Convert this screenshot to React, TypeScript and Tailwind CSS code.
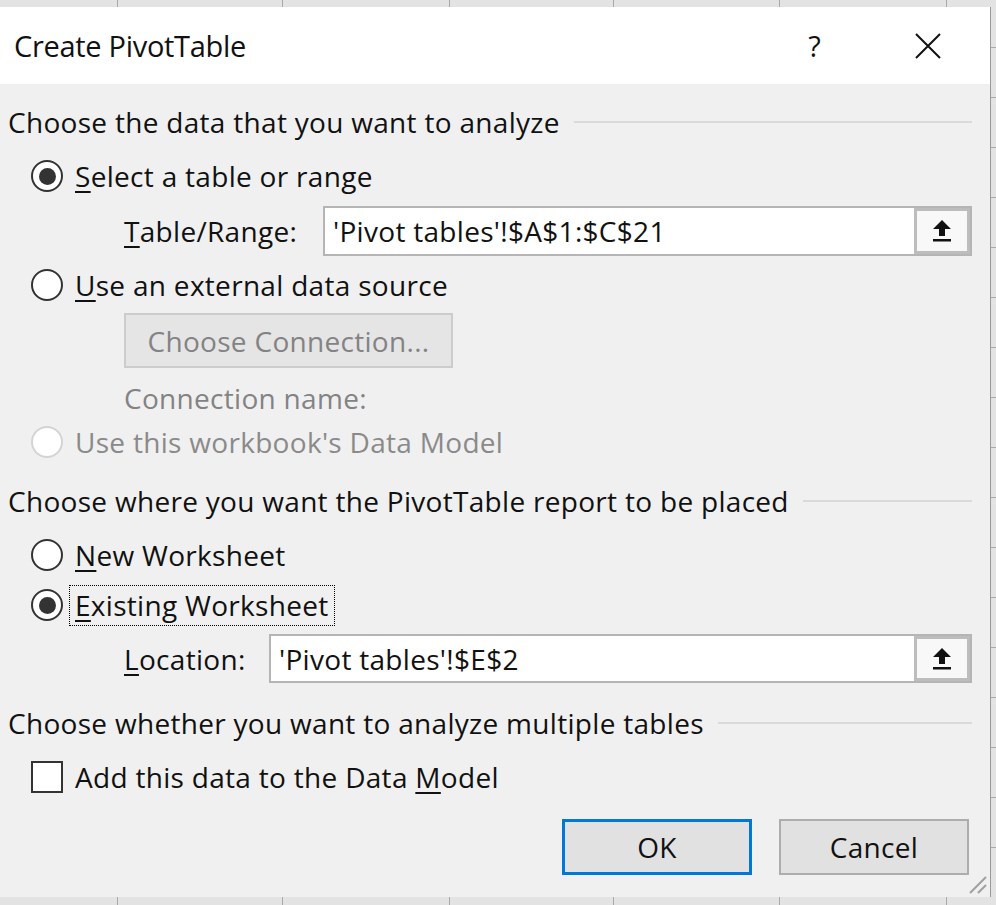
import React from "react";

const font = { fontFamily: '"Open Sans", "Noto Sans", sans-serif' };

function Radio({ checked = false, disabled = false }: { checked?: boolean; disabled?: boolean }) {
  return (
    <span
      className={`flex h-[32px] w-[32px] shrink-0 items-center justify-center rounded-full border-2 bg-white ${
        disabled ? "border-[#d4d4d4]" : "border-[#333333]"
      }`}
    >
      {checked && <span className="h-[17px] w-[17px] rounded-full bg-[#333333]" />}
    </span>
  );
}

function Heading({ text }: { text: string }) {
  return (
    <div className="flex h-[36px] items-center pl-[8px] pr-[18px]">
      <span className="whitespace-nowrap">{text}</span>
      <div className="ml-[14px] h-[2px] flex-1 bg-[#dadada]" />
    </div>
  );
}

function RefButton() {
  return (
    <div className="flex h-full w-[56px] items-center justify-center border-[3px] border-[#bdbdbd] bg-[#f8f8f8]">
      <svg width="22" height="24" viewBox="0 0 22 24">
        <path d="M11 1 L20 10 L14 10 L14 17 L8 17 L8 10 L2 10 Z" fill="#111" />
        <rect x="2" y="20" width="18" height="2.5" fill="#111" />
      </svg>
    </div>
  );
}

function GridStrip({ h }: { h: string }) {
  const cells = ["w-[118px]", "w-[165px]", "w-[167px]", "w-[164px]", "w-[166px]", "w-[167px]"];
  return (
    <div className={`flex ${h} w-full bg-[#e3e3e3]`}>
      {cells.map((c, i) => (
        <div key={i} className={`${c} h-full border-r border-[#a9a9a9]`} />
      ))}
      <div className="h-full flex-1" />
    </div>
  );
}

export default function App() {
  return (
    <div
      className="flex h-[905px] w-[996px] flex-col overflow-hidden bg-[#e3e3e3] text-[28px] tracking-[0.3px] text-[#111]"
      style={font}
    >
      <GridStrip h="h-[7px]" />

      <div className="flex h-[890px]">
        {/* Dialog */}
        <div className="flex w-[991px] flex-col border-r border-[#9a9a9a]">
          {/* Title bar */}
          <div className="flex h-[77px] items-center bg-white pl-[14px]">
            <span className="text-[29px] tracking-[-0.3px]">Create PivotTable</span>
            <span className="ml-auto mr-[93px] text-[29px]">?</span>
            <svg width="28" height="28" viewBox="0 0 28 28" className="mr-[48px]">
              <path d="M2 2 L26 26 M26 2 L2 26" stroke="#111" strokeWidth="2" />
            </svg>
          </div>

          {/* Body */}
          <div className="relative flex flex-1 flex-col bg-[#f0f0f0] pt-[20px]">
            <Heading text="Choose the data that you want to analyze" />

            <div className="mt-[18px] flex h-[36px] items-center gap-[12px] pl-[31px]">
              <Radio checked />
              <span>
                <span className="underline underline-offset-4">S</span>elect a table or range
              </span>
            </div>

            <div className="mt-[12px] flex h-[50px] items-center pl-[124px] pr-[18px]">
              <span className="w-[199px]">
                <span className="underline underline-offset-4">T</span>able/Range:
              </span>
              <div className="flex h-full flex-1 items-center border-2 border-[#b5b5b5] bg-white">
                <span className="flex-1 pl-[8px]">'Pivot tables'!$A$1:$C$21</span>
                <RefButton />
              </div>
            </div>

            <div className="mt-[11px] flex h-[36px] items-center gap-[12px] pl-[31px]">
              <Radio />
              <span>
                <span className="underline underline-offset-4">U</span>se an external data source
              </span>
            </div>

            <div className="mt-[10px] pl-[124px]">
              <div className="flex h-[55px] w-[329px] items-center justify-center border-2 border-[#cccccc] bg-[#e5e5e5] text-[#838383]">
                Choose Connection...
              </div>
            </div>

            <div className="mt-[12px] flex h-[36px] items-center pl-[124px] text-[#838383]">Connection name:</div>

            <div className="mt-[8px] flex h-[36px] items-center gap-[12px] pl-[31px] text-[#8a8a8a]">
              <Radio disabled />
              <span>Use this workbook's Data Model</span>
            </div>

            <div className="mt-[23px]">
              <Heading text="Choose where you want the PivotTable report to be placed" />
            </div>

            <div className="mt-[18px] flex h-[36px] items-center gap-[12px] pl-[31px]">
              <Radio />
              <span>
                <span className="underline underline-offset-4">N</span>ew Worksheet
              </span>
            </div>

            <div className="mt-[14px] flex h-[36px] items-center gap-[6px] pl-[31px]">
              <Radio checked />
              <span className="flex h-[41px] items-center border border-dotted border-black px-[5px]">
                <span className="underline underline-offset-4">E</span>xisting Worksheet
              </span>
            </div>

            <div className="mt-[11px] flex h-[49px] items-center pl-[124px] pr-[18px]">
              <span className="w-[145px]">
                <span className="underline underline-offset-4">L</span>ocation:
              </span>
              <div className="flex h-full flex-1 items-center border-2 border-[#b5b5b5] bg-white">
                <span className="flex-1 pl-[8px]">'Pivot tables'!$E$2</span>
                <RefButton />
              </div>
            </div>

            <div className="mt-[22px]">
              <Heading text="Choose whether you want to analyze multiple tables" />
            </div>

            <div className="mt-[18px] flex h-[36px] items-center gap-[12px] pl-[31px]">
              <span className="h-[32px] w-[32px] border-2 border-[#333333] bg-white" />
              <span>
                Add this data to the Data <span className="underline underline-offset-4">M</span>odel
              </span>
            </div>

            <div className="mt-[24px] flex justify-end gap-[27px] pr-[21px]">
              <button className="flex h-[56px] w-[190px] items-center justify-center border-[3px] border-[#0078d7] bg-[#e1e1e1]">
                OK
              </button>
              <button className="flex h-[56px] w-[190px] items-center justify-center border-2 border-[#adadad] bg-[#e1e1e1]">
                Cancel
              </button>
            </div>

            {/* resize grip */}
            <svg width="24" height="24" viewBox="0 0 24 24" className="absolute bottom-[2px] right-[2px]">
              <path d="M22 6 L6 22 M22 14 L14 22" stroke="#a0a0a0" strokeWidth="2" />
            </svg>
          </div>
        </div>

        {/* spreadsheet sliver */}
        <div className="flex flex-1 flex-col bg-[#e3e3e3]">
          <div className="h-[41px] border-b border-[#a9a9a9]" />
          <div className="h-[50px] border-b border-[#a9a9a9]" />
          <div className="h-[50px] border-b border-[#a9a9a9]" />
          <div className="h-[50px] border-b border-[#a9a9a9]" />
          <div className="h-[50px] border-b border-[#a9a9a9]" />
          <div className="h-[50px] border-b border-[#a9a9a9]" />
          <div className="h-[50px] border-b border-[#a9a9a9]" />
          <div className="h-[50px] border-b border-[#a9a9a9]" />
          <div className="h-[50px] border-b border-[#a9a9a9]" />
          <div className="h-[50px] border-b border-[#a9a9a9]" />
          <div className="h-[50px] border-b border-[#a9a9a9]" />
          <div className="h-[50px] border-b border-[#a9a9a9]" />
          <div className="h-[50px] border-b border-[#a9a9a9]" />
          <div className="h-[50px] border-b border-[#a9a9a9]" />
          <div className="h-[50px] border-b border-[#a9a9a9]" />
          <div className="h-[50px] border-b border-[#a9a9a9]" />
          <div className="h-[50px] border-b border-[#a9a9a9]" />
        </div>
      </div>

      <GridStrip h="h-[8px]" />
    </div>
  );
}
